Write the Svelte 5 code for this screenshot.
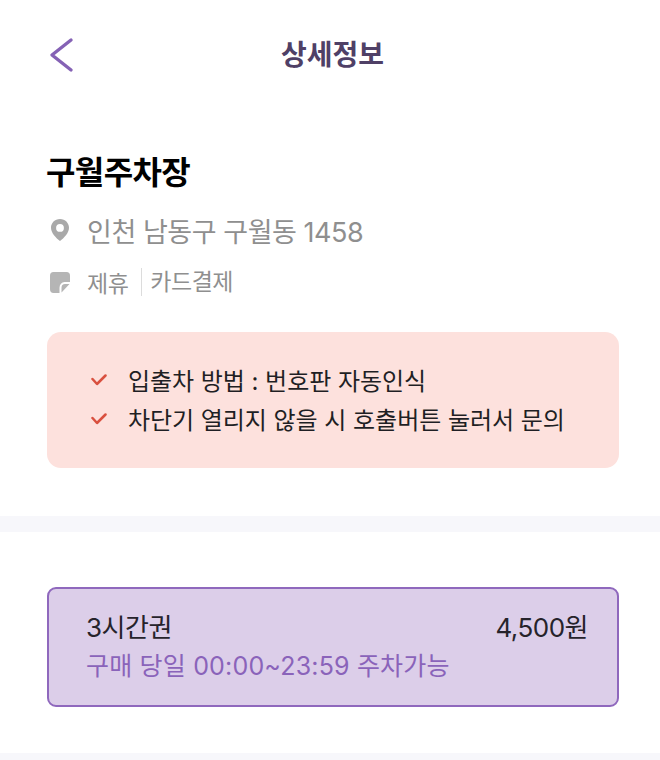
<script>
  const notes = ['입출차 방법 : 번호판 자동인식', '차단기 열리지 않을 시 호출버튼 눌러서 문의'];
</script>

<div class="page">
  <header class="top">
    <svg class="back" width="26" height="36" viewBox="0 0 26 36" fill="none">
      <path d="M23 3 L4 18 L23 33" stroke="#8562b5" stroke-width="3.400" stroke-linecap="round" stroke-linejoin="round"/>
    </svg>
    <h1>상세정보</h1>
  </header>

  <section class="info">
    <h2>구월주차장</h2>
    <div class="addr">
      <svg width="20" height="24" viewBox="0 0 20 24">
        <path fill-rule="evenodd" fill="#a9a9a9" d="M10 1C4.800 1 1 5 1 9.800c0 5 5 10.400 9 13.200 4-2.800 9-8.200 9-13.200C19 5 15.200 1 10 1Zm0 5a3.900 3.900 0 1 1 0 7.800A3.900 3.900 0 0 1 10 6Z"/>
      </svg>
      <span>인천 남동구 구월동 1458</span>
    </div>
    <div class="tags">
      <svg width="20" height="21" viewBox="0 0 20 20" preserveAspectRatio="none">
        <path fill="#b5b5b5" d="M3.500 0h13A3.500 3.500 0 0 1 20 3.500V9.500h-5.500A5.500 5.500 0 0 0 9.500 15V20H3.500A3.500 3.500 0 0 1 0 16.500v-13A3.500 3.500 0 0 1 3.500 0Z"/>
        <path fill="#b5b5b5" d="M19.500 11.500 11.500 19.500v-4.500A3.500 3.500 0 0 1 15 11.500Z"/>
      </svg>
      <span class="tag">제휴</span>
      <span class="tag second">카드결제</span>
    </div>

    <div class="notice">
      {#each notes as note}
        <div class="note">
          <svg width="16" height="12" viewBox="0 0 16 12" fill="none">
            <path d="M1.500 5 L6 10 L14.500 1.500" stroke="#d9503f" stroke-width="2.500" stroke-linecap="round" stroke-linejoin="round"/>
          </svg>
          <span>{note}</span>
        </div>
      {/each}
    </div>
  </section>

  <div class="divider"></div>

  <section class="tickets">
    <div class="ticket">
      <div class="row">
        <span>3시간권</span>
        <span>4,500원</span>
      </div>
      <div class="sub">구매 당일 00:00~23:59 주차가능</div>
    </div>
  </section>

  <div class="divider last"></div>
</div>

<style>
  :global(body) {
    margin: 0;
    background: #fff;
  }
  .page {
    width: 660px;
    height: 760px;
    overflow: hidden;
    font-family: "Inter", "Noto Sans CJK KR", sans-serif;
  }
  .top {
    position: relative;
    height: 110px;
    display: flex;
    justify-content: center;
    padding-top: 37px;
    box-sizing: border-box;
  }
  .back {
    position: absolute;
    left: 48px;
    top: 37px;
  }
  h1 {
    margin: 0 0 0 5px;
    font-size: 28px;
    line-height: 36px;
    font-weight: 700;
    color: #4f4066;
    letter-spacing: 0;
  }
  .info {
    padding: 43px 41px 48px 47px;
  }
  h2 {
    margin: 0 0 0 -1px;
    font-size: 32px;
    line-height: 40px;
    font-weight: 700;
    color: #000;
    letter-spacing: -0.6px;
  }
  .addr {
    display: flex;
    align-items: center;
    gap: 17px;
    margin: 17px 0 0 3px;
    height: 40px;
    font-size: 27px;
    color: #8f8f8f;
    letter-spacing: -0.45px;
  }
  .tags {
    display: flex;
    align-items: center;
    margin: 17px 0 0 3px;
    height: 30px;
    font-size: 23px;
    color: #8f8f8f;
    letter-spacing: -0.5px;
  }
  .tag {
    margin-left: 17px;
  }
  .tag.second {
    margin-left: 13px;
    padding-left: 8px;
    border-left: 1px solid #dcdcdc;
    line-height: 28px;
  }
  .notice {
    margin-top: 35px;
    height: 136px;
    box-sizing: border-box;
    padding: 28px 0 0 44px;
    background: #fde1dd;
    border-radius: 14px;
  }
  .note {
    display: flex;
    align-items: center;
    gap: 21px;
    height: 39px;
    font-size: 24px;
    color: #1f1f24;
    letter-spacing: -0.05px;
  }
  .divider {
    height: 16px;
    background: #f7f7fb;
  }
  .tickets {
    padding: 55px 41px 46px 47px;
  }
  .ticket {
    box-sizing: border-box;
    height: 120px;
    padding: 20px 29px 0 37px;
    background: #dccee9;
    border: 2px solid #8f68bd;
    border-radius: 9px;
  }
  .row {
    display: flex;
    justify-content: space-between;
    font-size: 26px;
    line-height: 38px;
    color: #26232b;
    letter-spacing: -0.5px;
  }
  .sub {
    font-size: 25px;
    line-height: 38px;
    color: #8a63ba;
    letter-spacing: 0.18px;
  }
</style>
